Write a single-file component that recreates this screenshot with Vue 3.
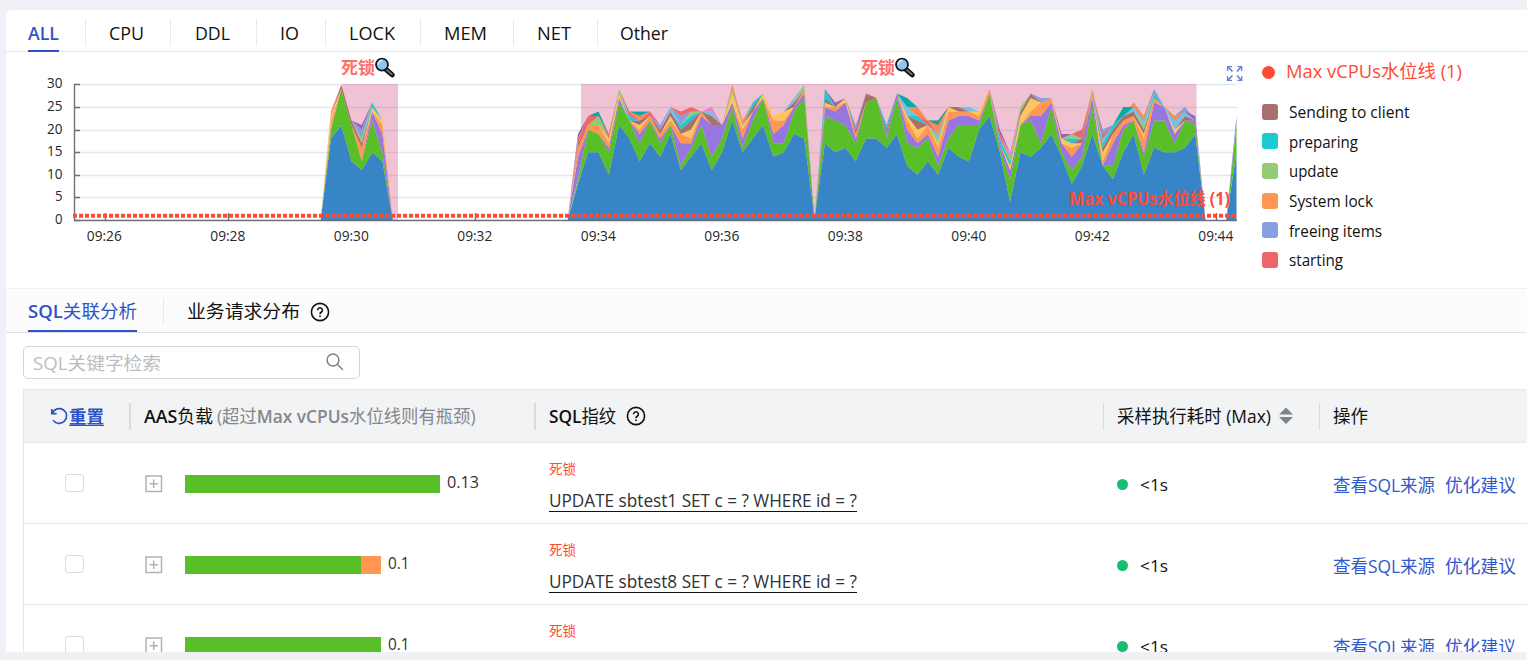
<script setup>
const tabs = [
  { t: 'ALL', w: 57, tw: 31 }, { t: 'CPU', w: 85, tw: 35 }, { t: 'DDL', w: 86, tw: 35 }, { t: 'IO', w: 69, tw: 19 },
  { t: 'LOCK', w: 95, tw: 46 }, { t: 'MEM', w: 93, tw: 43 }, { t: 'NET', w: 84, tw: 34 }, { t: 'Other', w: 96, tw: 48 }
]

// Stacking order of the wait states, bottom to top.
const series = [
  ['B', '#3785c7'], ['G', '#59bf28'], ['P', '#9876df'], ['O', '#ff9752'], ['Y', '#fbc65b'],
  ['D', '#a76f6d'], ['C', '#1ccbcf'], ['L', '#92cc76'], ['I', '#75c0de'], ['F', '#879ee3'],
  ['R', '#ee6768'], ['S', '#fc8a52'], ['T', '#0ba8a8'], ['K', '#e87fcf'], ['M', '#9b61b5']
]

// Cumulative tops at each ten-second sample.
const samples = {
  25: 'B18 G20 O22 Y23 S24', 26: 'B21 G29 D30', 27: 'B13 G21 D22', 28: 'B11 G13 O16 D17 L18 F20 M21',
  29: 'B15 G22 P24 Y25 C26', 30: 'B13 G15 P19 O21 Y22',
  49: 'B8 G9 P14 O16 D17 R18 M19', 50: 'B15 G20 O21 R23', 51: 'B15 G19 O21 L23 T24', 52: 'B10 G15 P16 O17 Y18 R19',
  53: 'B21 G26 P27 Y28 L29', 54: 'B18 G22 C23 R24', 55: 'B13 G17 P19 O20 Y21 D22 S23 T24', 56: 'B17 G22 O23 R24',
  57: 'B14 G17 P18 O19 D20 F21', 58: 'B19 G21 O22 Y23 D24 I25', 59: 'B11 G12 P17 O19 D20 C21 F23 R24',
  60: 'B14 G16 P17 O18 Y20 D22 C23 L24 R25', 61: 'B17 G21 P23 O24', 62: 'B11 G14 P21 D23 I24 K25', 63: 'B15 G18 P21',
  64: 'B22 G25 P26 Y28 L29 S30', 65: 'B15 G16 P18 O20 Y21 S22', 66: 'B18 G22 P24 D25 C26', 67: 'B21 G27 Y28',
  68: 'B14 G17 P19 O22 Y23', 69: 'B15 G17 P21 O22 Y24', 70: 'B19 G24 P25 D26 I27', 71: 'B18 G27 P28 O29 L30', 72: 'B0.2',
  73: 'B17 G23 P25 Y26 D27 C29', 74: 'B15 G22 P24 O25 M26', 75: 'B16 G21 P26 Y27', 76: 'B13 G17 P18 O19 D20 F21',
  77: 'B18 G26 D28', 78: 'B18 G27', 79: 'B16 G18 P19 D20 C21', 80: 'B19 G27 P28', 81: 'B12 G17 P20 O22 Y23 I25 T27',
  82: 'B10 G16 P17 O18 Y20 D22 C23 S25', 83: 'B13 G18 P19 O21 R22', 84: 'B10 G12 P14 O16 Y17 L18 I19 T21 S22',
  85: 'B16 G18 P22 O24 Y25', 86: 'B14 G21 P23 O24 D25', 87: 'B13 G21 P23 O24 I25', 88: 'B20 G21 P22 O23 Y24', 89: 'B23 G28 O29',
  90: 'B15 G16 P17 C18 R19 M20', 91: 'B4 G9 P11 Y12 C13 L14 K15', 92: 'B15 G21 Y23 D24 L25', 93: 'B14 G22 P23 O24 Y27 D28',
  94: 'B16 G17 P23 O26 F27', 95: 'B19 G25 P26 O27', 96: 'B14 G15 P17 Y18 M19', 97: 'B8 G11 P14 O16 Y17 C18 L19',
  98: 'B12 G14 P17 D18 R20', 99: 'B19 G25 P27 L28 S29', 100: 'B12 O13 Y15 D16 C17 F18 R19 I20', 101: 'B9 G12 P17 O19 D20 C21',
  102: 'B15 G20 P21 O22 D23 T25', 103: 'B19 G22 O23 D24 S25 I26', 104: 'B10 G14 P15 O18 Y19 D20 L21 S22 I23',
  105: 'B16 G22 P26 O27 C28 F29', 106: 'B15 G22 P25', 107: 'B15 G17 P19 Y20 S22 I23', 108: 'B16 G22 D23 F24 I25',
  109: 'B19 G21 P22 M23', 113: 'B15 G21 P23'
}
const px = i => 73.7 + 10.29 * i
const py = v => 220 - v * 4.52
const tops = Array.from({ length: 114 }, (_, i) => {
  const known = Object.fromEntries((samples[i] || '').split(' ').filter(Boolean).map(s => [s[0], Number(s.slice(1))]))
  let level = 0
  return series.map(([key]) => (level = known[key] ?? level))
})
const areas = series.map(([, color], k) => {
  const upper = tops.map((p, i) => `${px(i).toFixed(1)},${py(p[k]).toFixed(1)}`)
  const lower = tops.map((p, i) => `${px(i).toFixed(1)},${py(k ? p[k - 1] : 0).toFixed(1)}`).reverse()
  return { color, points: upper.concat(lower).join(' ') }
})
const yTicks = [0, 5, 10, 15, 20, 25, 30]
const xTicks = Array.from({ length: 10 }, (_, i) => ({ x: 104.8 + i * 123.5, t: '09:' + (26 + i * 2) }))
const legend = [
  ['Sending to client', '#a76f6d', 120.5], ['preparing', '#1ccbcf', 69], ['update', '#92cc76', 49.5],
  ['System lock', '#ff9752', 84], ['freeing items', '#879ee3', 93], ['starting', '#ee6768', 54]
]
const rows = [
  { g: 255, o: 0, v: '0.13', sql: 'UPDATE sbtest1 SET c = ? WHERE id = ?' },
  { g: 176, o: 20, v: '0.1', sql: 'UPDATE sbtest8 SET c = ? WHERE id = ?' },
  { g: 196, o: 0, v: '0.1', sql: '' }
]
</script>

<template>
  <div class="page">
    <main class="panel">
      <nav class="tabs">
        <div v-for="(tab, i) in tabs" :key="tab.t" class="tab" :class="{ active: i === 0 }" :style="{ width: tab.w + 'px' }">
          <svg class="label" :width="tab.tw" height="40"><text x="0" y="29.5" :textLength="tab.tw" lengthAdjust="spacingAndGlyphs">{{ tab.t }}</text></svg>
        </div>
      </nav>

      <section class="overview">
        <svg class="chart" width="1240" height="236" viewBox="6 52 1240 236">
          <line v-for="v in yTicks.slice(1)" :key="v" x1="74" x2="1237" :y1="Math.round(py(v)) + .5" :y2="Math.round(py(v)) + .5" stroke="#e0e6f1" stroke-width="1.5" />
          <rect x="342" y="84" width="56" height="136" fill="#d96f95" fill-opacity=".42" />
          <rect x="581" y="84" width="615.5" height="136" fill="#d96f95" fill-opacity=".42" />
          <polygon v-for="(a, i) in areas" :key="i" :points="a.points" :fill="a.color" />
          <g stroke="#6e7079" stroke-width="1.4">
            <line x1="74.5" x2="74.5" y1="84" y2="220" />
            <line x1="74" x2="1237" y1="220.5" y2="220.5" />
            <line v-for="v in yTicks" :key="v" x1="74" x2="80" :y1="Math.round(py(v)) + .5" :y2="Math.round(py(v)) + .5" />
            <line v-for="t in xTicks" :key="t.t" :x1="Math.round(t.x) + .5" :x2="Math.round(t.x) + .5" y1="213" y2="220" />
          </g>
          <line x1="73" x2="1237" y1="215.8" y2="215.8" stroke="#ff4a35" stroke-width="4" stroke-dasharray="4 2" />
          <g class="axis">
            <text v-for="v in yTicks" :key="v" x="62.5" :y="py(v) + 4" text-anchor="end" :textLength="v < 10 ? 7.5 : 15.5" lengthAdjust="spacingAndGlyphs">{{ v }}</text>
            <text v-for="t in xTicks" :key="t.t" :x="t.x - .5" y="241" text-anchor="middle" textLength="35" lengthAdjust="spacingAndGlyphs">{{ t.t }}</text>
          </g>
          <g v-for="x in [341, 861]" :key="x" :transform="`translate(${x} 58)`">
            <text class="lock" x="0" y="15.5" textLength="34" lengthAdjust="spacingAndGlyphs">死锁</text>
            <path d="M45 11.5 51.3 16.8" stroke="#111" stroke-width="5" stroke-linecap="round" />
            <path d="M46 12.2 50.8 16.3" stroke="#607078" stroke-width="2" stroke-linecap="round" />
            <circle cx="41" cy="6.6" r="6" fill="#8ec6f2" stroke="#15191c" stroke-width="1.8" />
            <path d="M37.5 6.6a4 4 0 0 1 4-4" fill="none" stroke="#c9e6fb" stroke-width="2" />
          </g>
          <text class="mark" x="1069" y="205" textLength="161" lengthAdjust="spacingAndGlyphs">Max vCPUs水位线 (1)</text>
          <g fill="none" stroke="#6380d5" stroke-width="1.6">
            <path d="M1232.5 71.5 1228 67M1237 71.5 1241 67M1232.5 75.5 1228 80M1237 75.5 1241 80" />
            <path d="M1227.6 71V66.6H1232M1237.5 66.6H1241.7V71M1227.6 76V80.3H1232M1237.5 80.3H1241.7V76" stroke-width="1.3" />
          </g>
        </svg>
        <aside class="legend">
          <div class="limit"><i></i><svg width="178" height="26"><text x="0" y="19" textLength="176" lengthAdjust="spacingAndGlyphs">Max vCPUs水位线 (1)</text></svg></div>
          <div v-for="l in legend" :key="l[0]" class="entry">
            <i :style="{ background: l[1] }"></i>
            <svg width="130" height="24"><text x="0" y="17" :textLength="l[2]" lengthAdjust="spacingAndGlyphs">{{ l[0] }}</text></svg>
          </div>
        </aside>
      </section>

      <nav class="subtabs">
        <div class="sub active"><svg width="109" height="40"><text x="0" y="28.5" textLength="109" lengthAdjust="spacingAndGlyphs"><tspan class="semi">SQL</tspan>关联分析</text></svg></div>
        <div class="sub second">
          <svg width="113" height="40"><text x="0" y="28.5" textLength="113" lengthAdjust="spacingAndGlyphs">业务请求分布</text></svg>
          <svg class="help" width="20" height="20" viewBox="0 0 20 20"><circle cx="10" cy="10" r="8.6" /><path d="M7.6 8.2a2.4 2.4 0 1 1 3.6 2.1c-.8.45-1.2.9-1.2 1.9M10 13.5v1.5" /></svg>
        </div>
      </nav>

      <div class="search">
        <svg width="128" height="30"><text x="0" y="22" textLength="128" lengthAdjust="spacingAndGlyphs">SQL关键字检索</text></svg>
        <svg class="glass" width="20" height="20" viewBox="0 0 20 20"><circle cx="8" cy="8" r="5.9" /><path d="m12.3 12.3 5.6 5.4" /></svg>
      </div>

      <section class="table">
        <header class="head row">
          <div class="c1 reset">
            <svg width="18" height="18" viewBox="0 0 18 18"><path d="M1.8 2v4.7h4.8M2.3 6.2A7.4 7.4 0 1 1 3 13.1" /></svg>
            <b>重置</b>
          </div>
          <div class="c2 cell split"><svg width="340" height="30"><text x="0" y="22" textLength="69" lengthAdjust="spacingAndGlyphs"><tspan class="semi">AAS</tspan>负载</text><text class="note" x="73" y="22" textLength="258.5" lengthAdjust="spacingAndGlyphs">(超过<tspan class="semi">Max vCPUs</tspan>水位线则有瓶颈)</text></svg></div>
          <div class="c3 cell split"><svg width="68" height="30"><text x="0" y="22" textLength="67" lengthAdjust="spacingAndGlyphs"><tspan class="semi">SQL</tspan>指纹</text></svg>
            <svg class="help" width="20" height="20" viewBox="0 0 20 20"><circle cx="10" cy="10" r="8.6" /><path d="M7.6 8.2a2.4 2.4 0 1 1 3.6 2.1c-.8.45-1.2.9-1.2 1.9M10 13.5v1.5" /></svg></div>
          <div class="c4 cell split thin"><svg width="154" height="30"><text x="0" y="22" textLength="154" lengthAdjust="spacingAndGlyphs">采样执行耗时 (Max)</text></svg>
            <svg class="sort" width="14" height="18" viewBox="0 0 14 18"><path d="M0 7.5 7 .5l7 7zM0 10h14l-7 7z" fill="#808389" /></svg></div>
          <div class="c5 cell split thin"><svg width="36" height="30"><text x="0" y="22" textLength="35" lengthAdjust="spacingAndGlyphs">操作</text></svg></div>
        </header>
        <div v-for="(r, i) in rows" :key="i" class="row body">
          <div class="c1"><span class="check"></span></div>
          <div class="c2 load">
            <svg class="plus" width="18" height="18" viewBox="0 0 18 18"><rect x="1" y="1" width="15.5" height="15.5" /><path d="M8.7 4.5v8.5M4.5 8.7H13" /></svg>
            <span class="bar green" :style="{ width: r.g + 'px' }"></span><span class="bar orange" :style="{ width: r.o + 'px' }"></span>
            <svg class="value" width="40" height="24"><text x="0" y="16.5" :textLength="r.v.length === 4 ? 32 : 21.5" lengthAdjust="spacingAndGlyphs">{{ r.v }}</text></svg>
          </div>
          <div class="c3 finger">
            <svg class="dead" width="30" height="20"><text x="0" y="14" textLength="27" lengthAdjust="spacingAndGlyphs">死锁</text></svg>
            <svg v-if="r.sql" class="sql" width="308" height="24"><text x="0" y="19" textLength="308" lengthAdjust="spacingAndGlyphs">{{ r.sql }}</text></svg>
          </div>
          <div class="c4 time"><i></i><svg width="40" height="24"><text x="0" y="19" textLength="28" lengthAdjust="spacingAndGlyphs">&lt;1s</text></svg></div>
          <div class="c5 actions">
            <svg width="102" height="28"><text x="0" y="20.5" textLength="102" lengthAdjust="spacingAndGlyphs">查看SQL来源</text></svg>
            <svg width="71" height="28"><text x="0" y="20.5" textLength="71" lengthAdjust="spacingAndGlyphs">优化建议</text></svg>
          </div>
        </div>
      </section>
    </main>
  </div>
</template>

<style>
body { margin: 0; overflow: hidden; background: #f0f1f6; }
</style>

<style scoped>
* { box-sizing: border-box; }
.page { height: 660px; width: 1527px; padding: 10px 0 8px 6px; background: #f0f1f6; overflow: hidden; font: 18px "Open Sans", "Noto Sans CJK SC", sans-serif; color: #111; }
svg { display: block; flex: none; overflow: visible; }
text { fill: currentColor; }
.semi { font-weight: 600; }
.panel { height: 642px; background: #fff; border-top-left-radius: 6px; overflow: hidden; display: flex; flex-direction: column; }
.tabs { height: 42px; flex: none; display: flex; padding-left: 22px; border-bottom: 1px solid #e5e6e8; }
.tab { height: 42px; display: flex; position: relative; flex: none; }
.tab:not(.active) { justify-content: center; padding-right: 2px; }
.tab:not(:last-child)::after { content: ""; position: absolute; right: -1px; top: 9px; height: 27px; width: 1px; background: #e9eaed; }
.tab.active .label { border-bottom: 2px solid #2e53c7; height: 42px; }
.tab.active { color: #2e53c7; font-weight: 600; }
.overview { height: 236px; flex: none; display: flex; }
.axis { font-size: 14px; color: #26282c; }
.lock { font-size: 16.5px; font-weight: 700; color: #ff6e68; }
.mark { font-size: 17px; font-weight: 700; color: #ff4a35; }
.legend { padding: 7px 0 0 16px; }
.limit { display: flex; align-items: center; height: 26px; color: #ff4a35; margin-bottom: 13.5px; gap: 11px; }
.limit i { width: 13px; height: 13px; border-radius: 50%; background: #ff4a35; }
.entry { display: flex; align-items: center; gap: 11px; height: 29.6px; font-size: 16px; }
.entry i { width: 16px; height: 16px; border-radius: 3px; margin-bottom: 3px; }
.subtabs { height: 45px; flex: none; border-top: 1px solid #efeff0; border-bottom: 1px solid #dedfe1; background: #fcfcfc; display: flex; padding-left: 22px; }
.sub.active { height: 43px; width: 109px; border-bottom: 2px solid #2e53c7; color: #2e53c7; }
.second { display: flex; position: relative; margin-left: 50px; align-items: flex-start; }
.second::before { content: ""; position: absolute; left: -24px; top: 9px; width: 1px; height: 27px; background: #e9eaed; }
.help { fill: none; stroke: currentColor; stroke-width: 1.6; }
.second .help { margin: 13px 0 0 10px; }
.search { width: 337px; height: 33px; flex: none; margin: 13px 0 10px 17px; border: 1px solid #d5d6d9; border-radius: 5px; padding: 0 14px 0 9px; display: flex; justify-content: space-between; align-items: center; color: #bcbdc0; }
.glass { fill: none; stroke: #818181; stroke-width: 1.5; margin-bottom: 1px; }
.table { margin-left: 17px; border-left: 1px solid #e5e6e8; border-top: 1px solid #e5e6e8; flex: none; }
.row { display: grid; grid-template-columns: 106px 405px 568px 216px 210px; border-bottom: 1px solid #e5e6e8; }
.head { height: 53px; background: #f2f3f5; align-items: center; }
.reset { display: flex; align-items: center; gap: 1px; padding-left: 26px; color: #2e53c7; font-size: 17.5px; }
.reset svg { fill: none; stroke: currentColor; stroke-width: 1.7; }
.reset b { border-bottom: 1px solid #2e53c7; line-height: 18px; margin-top: 1px; }
.cell { display: flex; align-items: center; height: 27px; padding-left: 13px; border-left: 2px solid #dadbde; margin-left: -1px; }
.thin { border-left-width: 1px; margin-left: 0; }
.note { color: #85878b; }
.c3 .help { margin-left: 9px; }
.sort { margin-left: 8px; }
.body { height: 81px; }
.check { display: block; margin: 31px 0 0 41px; width: 19px; height: 18px; border: 1px solid #d9dce5; border-radius: 3px; }
.load { display: flex; align-items: flex-start; padding: 32px 0 0 15px; }
.plus { fill: none; stroke: #b2b2b2; stroke-width: 1.5; margin-right: 22px; }
.bar { height: 18px; flex: none; }
.green { background: #59bf28; }
.orange { background: #ff9752; }
.value { margin-left: 7px; margin-top: -4px; font-size: 16px; color: #303133; }
.finger { padding-left: 14px; padding-top: 17px; }
.dead { font-size: 13.5px; color: #ff4a35; }
.sql { height: 24px; margin-top: 8px; border-bottom: 1px solid #111; font-size: 17.5px; color: #303133; }
.time { display: flex; align-items: center; height: 24px; margin: 29px 0 0 14px; gap: 12px; font-size: 16.5px; }
.time i { width: 11px; height: 11px; border-radius: 50%; background: #14bf70; }
.actions { display: flex; gap: 10px; padding: 28px 0 0 14px; color: #3159ce; }
</style>
